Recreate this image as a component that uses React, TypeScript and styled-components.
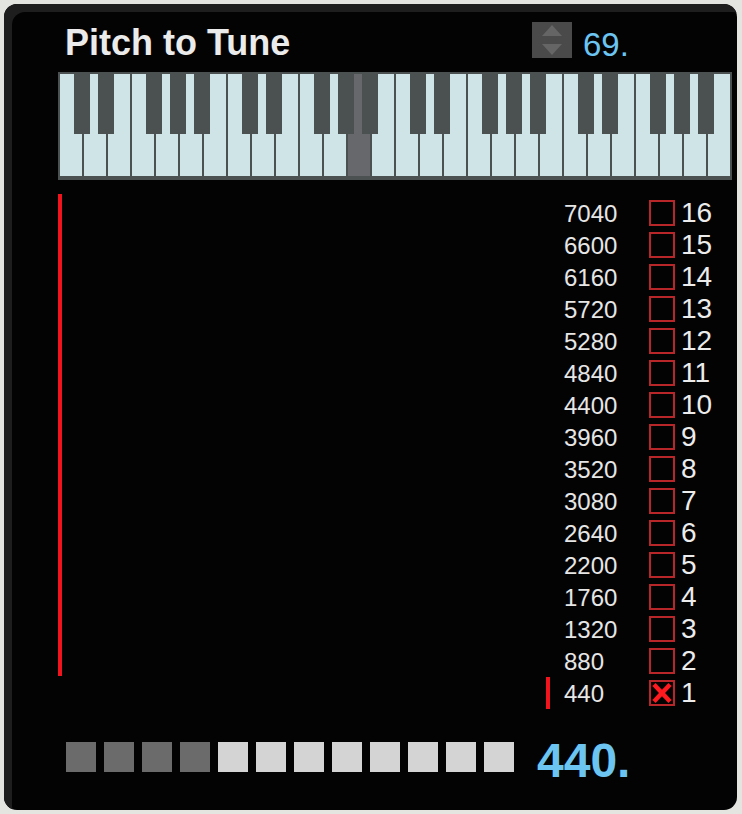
import React from "react";
import styled, { createGlobalStyle } from "styled-components";

const GlobalStyle = createGlobalStyle`
  html, body { margin: 0; padding: 0; background: #e4e4e1; }
  body { font-family: "Liberation Sans", Arial, sans-serif; }
  * { box-sizing: border-box; }
`;

const Panel = styled.div`
  margin: 4px;
  width: 733px;
  height: 806px;
  border-radius: 13px;
  background: #030303;
  box-shadow: inset 8px 8px 0 0 #1e1e1e;
  padding: 18px 5px 0 54px;
  display: flex;
  flex-direction: column;
`;

const Header = styled.div`
  display: flex;
  align-items: flex-start;
  height: 36px;
`;

const Title = styled.div`
  flex: 1;
  margin: 3px 0 0 7px;
  font-size: 36px;
  line-height: 36px;
  font-weight: 700;
  color: #ebebeb;
  white-space: nowrap;
`;

const NumberGroup = styled.div`
  width: 200px;
  display: flex;
  align-items: flex-start;
`;

const Stepper = styled.div`
  width: 40px;
  height: 36px;
  background: #4a4a4a;
  display: flex;
`;

const Value = styled.div`
  margin: 5px 0 0 11px;
  font-size: 33px;
  line-height: 36px;
  color: #6cc5f1;
`;

const Keyboard = styled.div`
  position: relative;
  margin-top: 14px;
  width: 674px;
  height: 108px;
  background: #4b5150;
  padding: 2px 2px 4px 2px;
  display: flex;
  gap: 2px;
`;

const WhiteKey = styled.div<{ $active?: boolean }>`
  width: 22px;
  height: 100%;
  background: ${(p) => (p.$active ? "#66686c" : "#cee4e7")};
`;

const BlackKey = styled.div<{ $offset: number }>`
  position: absolute;
  top: 2px;
  left: ${(p) => p.$offset}px;
  width: 16px;
  height: 60px;
  background: #4b5150;
`;

const Body = styled.div`
  display: flex;
  align-items: flex-start;
  height: 529px;
`;

const LevelBar = styled.div`
  margin-top: 14px;
  width: 4px;
  height: 482px;
  background: #f2141c;
`;

const Channels = styled.div`
  margin: 17px 0 0 auto;
  width: 186px;
  display: flex;
  flex-direction: column;
`;

const ChannelRow = styled.div`
  height: 32px;
  display: flex;
  align-items: center;
`;

const Marker = styled.div<{ $on?: boolean }>`
  width: 4px;
  height: 32px;
  background: ${(p) => (p.$on ? "#f2141c" : "transparent")};
`;

const Freq = styled.div`
  margin-left: 14px;
  width: 54px;
  padding-top: 2px;
  text-align: left;
  font-size: 24px;
  line-height: 32px;
  color: #e6e6e6;
  white-space: nowrap;
`;

const Check = styled.div`
  margin-left: 31px;
  width: 26px;
  height: 26px;
  border: 2px solid #b8262a;
  display: flex;
`;

const Index = styled.div`
  margin-left: 6px;
  font-size: 28px;
  line-height: 32px;
  color: #ececec;
`;

const Footer = styled.div`
  margin-top: 33px;
  padding-left: 8px;
  display: flex;
  align-items: flex-start;
`;

const Steps = styled.div`
  display: flex;
  gap: 8px;
`;

const Step = styled.div<{ $on?: boolean }>`
  width: 30px;
  height: 30px;
  background: ${(p) => (p.$on ? "#6b6b6b" : "#d4d4d4")};
`;

const Readout = styled.div`
  margin: -5px 0 0 23px;
  font-size: 48px;
  line-height: 48px;
  font-weight: 700;
  color: #6cc5f1;
`;

const WHITE_COUNT = 28;
const ACTIVE_WHITE = 12;
const hasBlackAfter = (i: number) => [0, 1, 3, 4, 5].includes(i % 7);

const channels = Array.from({ length: 16 }, (_, k) => 16 - k);

export default function App() {
  return (
    <>
      <GlobalStyle />
      <Panel>
        <Header>
          <Title>Pitch to Tune</Title>
          <NumberGroup>
            <Stepper>
              <svg width="40" height="36" viewBox="0 0 40 36">
                <polygon points="10,14 30,14 20,3" fill="#656565" />
                <polygon points="10,22 30,22 20,33" fill="#656565" />
              </svg>
            </Stepper>
            <Value>69.</Value>
          </NumberGroup>
        </Header>

        <Keyboard>
          {Array.from({ length: WHITE_COUNT }, (_, i) => (
            <WhiteKey key={`w${i}`} $active={i === ACTIVE_WHITE} />
          ))}
          {Array.from({ length: WHITE_COUNT }, (_, i) =>
            hasBlackAfter(i) && i < WHITE_COUNT - 1 ? (
              <BlackKey key={`b${i}`} $offset={24 * (i + 1) - 8} />
            ) : null
          )}
        </Keyboard>

        <Body>
          <LevelBar />
          <Channels>
            {channels.map((n) => (
              <ChannelRow key={n}>
                <Marker $on={n === 1} />
                <Freq>{n * 440}</Freq>
                <Check>
                  {n === 1 && (
                    <svg width="22" height="22" viewBox="0 0 22 22">
                      <line x1="3" y1="2.5" x2="19" y2="19.5" stroke="#ff1a1f" strokeWidth="4.5" />
                      <line x1="19" y1="2.5" x2="3" y2="19.5" stroke="#ff1a1f" strokeWidth="4.5" />
                    </svg>
                  )}
                </Check>
                <Index>{n}</Index>
              </ChannelRow>
            ))}
          </Channels>
        </Body>

        <Footer>
          <Steps>
            {Array.from({ length: 12 }, (_, i) => (
              <Step key={i} $on={i < 4} />
            ))}
          </Steps>
          <Readout>440.</Readout>
        </Footer>
      </Panel>
    </>
  );
}
